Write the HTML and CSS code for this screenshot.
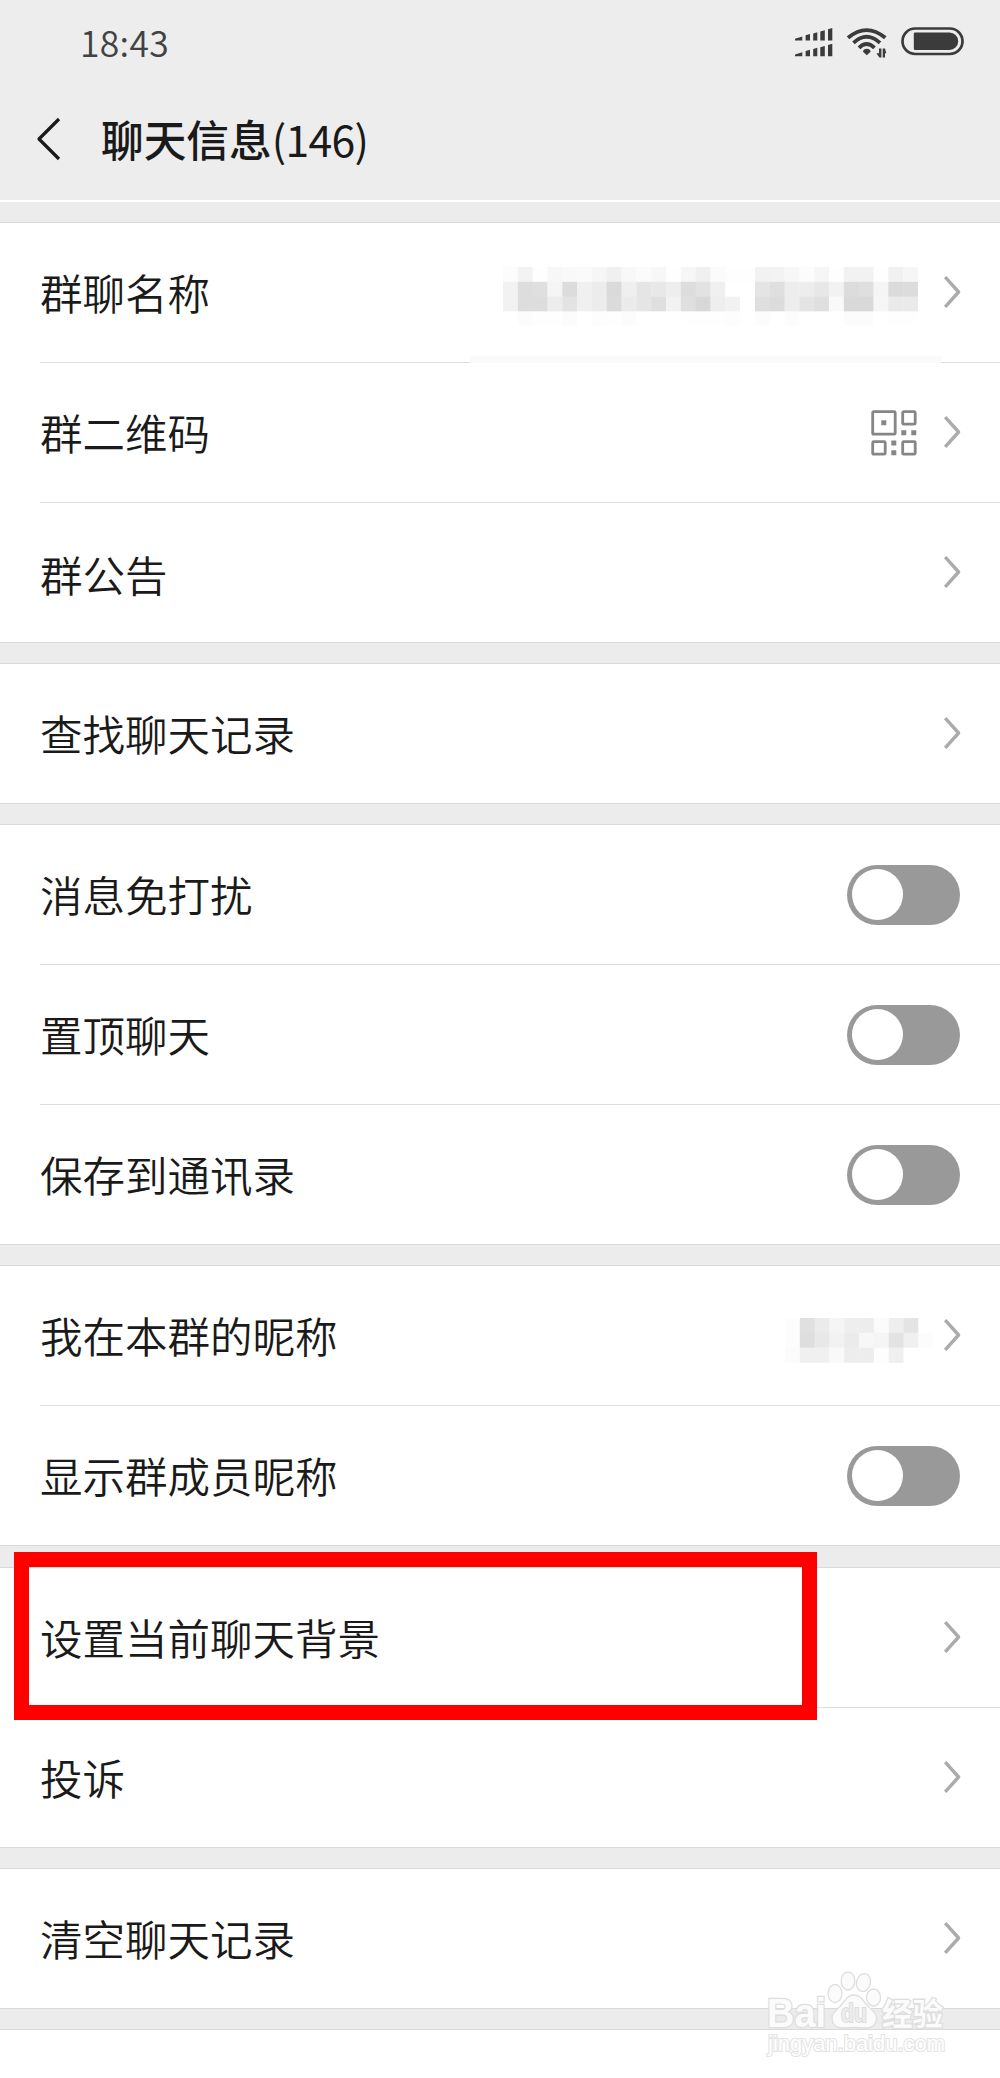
FILE: index.html
```html
<!DOCTYPE html>
<html lang="zh-CN">
<head>
<meta charset="utf-8">
<title>聊天信息</title>
<link rel="stylesheet" href="styles.css">
</head>
<body>
<svg class="defs" width="0" height="0" aria-hidden="true">
  <symbol id="chevron" viewBox="0 0 18 34"><path d="M2.2 2.2 15.6 17 2.2 31.8" fill="none" stroke="#ababab" stroke-width="3.4" stroke-linejoin="round"/></symbol>
</svg>
<div class="screen">
  <header class="header">
    <div class="status">
      <span class="time">18:43</span>
      <svg class="status-icons" width="172" height="34" viewBox="0 0 172 34" fill="#3b3b3b">
        <path d="M0 11.8 7.3 9.6V13.5H0zM10.6 8.3 15 7V13.5H10.6zM18.2 6.4 22.3 5.2V13.5H18.2zM25.3 4.6 29.8 3.3V13.5H25.3zM33 2.2 37.3 1V13.5H33z"/>
        <path d="M0 27.4 7.3 25.2V29.2H0zM10.6 24 15 22.7V29.2H10.6zM18.2 22 22.3 20.8V29.2H18.2zM25.3 20.2 29.8 19V29.2H25.3zM33 18 37.3 16.8V29.2H33z"/>
        <g fill="none" stroke="#3b3b3b" stroke-width="3.8">
          <path d="M53 10.8Q71.500-4.600 90.300 10.800"/>
          <path d="M58.500 15.800Q71.500 3.800 85 15.800"/>
          <path d="M64 20.800Q71.500 13.300 79.500 20.800"/>
        </g>
        <path d="M71.800 21.700c2 0 3.800 1.200 3.800 3L71.800 28.300 68 24.700c0-1.800 1.800-3 3.800-3z"/>
        <path d="M84 21.500H86.400V30.500H84.400L81.400 26.300H84zM87.700 21.500H90L91.300 26.300H90V30.500H87.700z"/>
        <rect x="107.500" y="1.500" width="60" height="25.500" rx="12.700" fill="none" stroke="#3b3b3b" stroke-width="2.700"/>
        <path d="M120 5.500H154.500a8.700 8.700 0 0 1 0 17.400H120a1.200 1.200 0 0 1-1.200-1.200V6.700A1.200 1.200 0 0 1 120 5.500z"/>
      </svg>
    </div>
    <div class="titlebar">
      <svg class="back" width="26" height="44" viewBox="0 0 26 44"><path d="M23 2 3 22 23 42" fill="none" stroke="#1a1a1a" stroke-width="3.200" stroke-linejoin="round"/></svg>
      <h1 class="title">聊天信息<span class="count">(146)</span></h1>
    </div>
  </header>
  <main class="list">
    <section class="group">
      <div class="row row-name"><span class="label">群聊名称</span><svg class="mosaic" width="415" height="59.200" data-cells="fcf3fef7f9faf6f0f8fbf7fef6f0fbfefef2f3f7fcf6fef2f2fef1f6 f2dddff5dcf0ecdaefe5e8eedde2f0ffffe4dfedede7f2dcdff5dadc f2ddddede3f0ecdbebe5dff2dfd8eef2ffdfdcede4dff9d9d9f6eaea fffcfefefcfffdfefcfffffffefefefdfffcfffcfffffffcfcfffefe"></svg><svg class="chevron"><use href="#chevron"/></svg></div>
      <div class="row"><span class="label">群二维码</span>
        <svg class="qr" width="46" height="46" viewBox="0 0 46 46"><g fill="none" stroke="#868686" stroke-width="2.800"><rect x="1.700" y="1.700" width="22.500" height="22.500" rx="1"/><rect x="31.700" y="1.700" width="12.500" height="12.500" rx="1"/><rect x="1.700" y="31.700" width="12.500" height="12.500" rx="1"/><rect x="31.700" y="31.700" width="12.500" height="12.500" rx="1"/></g><path fill="#868686" d="M10.300 10.300h5v5h-5zM30.300 20.300h5v5h-5zM40.300 20.300h5v5h-5zM20.300 30.500h5v5h-5zM20.300 40.300h5v5h-5z"/></svg>
        <svg class="chevron"><use href="#chevron"/></svg></div>
      <div class="row row-low"><span class="label">群公告</span><svg class="chevron"><use href="#chevron"/></svg></div>
    </section>
    <section class="group">
      <div class="row"><span class="label">查找聊天记录</span><svg class="chevron"><use href="#chevron"/></svg></div>
    </section>
    <section class="group">
      <div class="row"><span class="label">消息免打扰</span><span class="toggle"></span></div>
      <div class="row"><span class="label">置顶聊天</span><span class="toggle"></span></div>
      <div class="row"><span class="label">保存到通讯录</span><span class="toggle"></span></div>
    </section>
    <section class="group">
      <div class="row row-nick"><span class="label">我在本群的昵称</span><svg class="mosaic" width="148" height="44.400" data-cells="fde0ebf5eeedfbeee4ff fddee8f2ebf7f5e3f0fc fbf0f0f9ededfdefffff"></svg><svg class="chevron"><use href="#chevron"/></svg></div>
      <div class="row"><span class="label">显示群成员昵称</span><span class="toggle"></span></div>
    </section>
    <section class="group group-marked">
      <div class="row"><span class="label">设置当前聊天背景</span><svg class="chevron"><use href="#chevron"/></svg></div>
      <div class="row"><span class="label">投诉</span><svg class="chevron"><use href="#chevron"/></svg></div>
      <div class="highlight"></div>
    </section>
    <section class="group">
      <div class="row"><span class="label">清空聊天记录</span><svg class="chevron"><use href="#chevron"/></svg></div>
    </section>
    <section class="group group-next"></section>
  </main>
  <svg class="watermark" width="190" height="96" viewBox="0 0 190 96">
    <g class="wm-text">
      <text class="wm-bai" x="5" y="60.500" textLength="59" lengthAdjust="spacingAndGlyphs">Bai</text>
      <ellipse cx="73" cy="27.500" rx="7" ry="9"/><ellipse cx="86" cy="15" rx="6.800" ry="9"/><ellipse cx="101.500" cy="16.500" rx="7" ry="9" transform="rotate(12 101.500 16.500)"/><ellipse cx="111.500" cy="31.500" rx="7" ry="8.500"/>
      <path d="M92 29c6 0 8.500 4.500 12 9s10.500 8 10.500 14c0 7-5 10-11 10-4 0-7-.500-11.500-.500s-7 .500-11 .500c-6 0-11-3-11-10 0-6 6.500-9.500 10-14s6-9 12-9z"/>
      <text class="wm-du" x="79" y="56" textLength="26" lengthAdjust="spacingAndGlyphs">du</text>
      <text class="wm-cn" x="120" y="58.500" textLength="61" lengthAdjust="spacingAndGlyphs">经验</text>
      <text class="wm-url" x="6" y="84.500" textLength="177" lengthAdjust="spacingAndGlyphs">jingyan.baidu.com</text>
    </g>
  </svg>
</div>
<script src="script.js"></script>
</body>
</html>
```
FILE: styles.css
```css
* { box-sizing: border-box; }

body {
  margin: 0;
  background: #ececec;
  color: #1a1a1a;
  font-family: "Noto Sans CJK SC", "Noto Sans", sans-serif;
}

.defs { position: absolute; }

.screen {
  position: relative;
  width: 1000px;
  height: 2078px;
  overflow: hidden;
}

.header {
  height: 202px;
  background: #ededed;
  border-bottom: 2px solid #fff;
}

.status {
  display: flex;
  align-items: center;
  justify-content: space-between;
  height: 84px;
  padding: 0 33px 0 80px;
}

.time {
  padding-bottom: 1px;
  color: #424242;
  font-size: 35.5px;
  font-weight: 350;
  letter-spacing: 0.3px;
  line-height: 40px;
}

.status-icons { margin-top: 4px; }

.titlebar {
  display: flex;
  align-items: center;
  height: 110px;
  padding-left: 36px;
}

.title {
  margin: -3px 0 0 39px;
  font-size: 42.7px;
  font-weight: 500;
  line-height: 60px;
}

.count { font-weight: 400; letter-spacing: -0.7px; }

.list {
  display: flex;
  flex-direction: column;
  gap: 20px;
  padding-top: 20px;
}

.group {
  background: #fff;
  border-top: 1px solid #dadada;
  border-bottom: 1px solid #dadada;
}

.row {
  position: relative;
  display: flex;
  align-items: center;
  height: 140px;
  margin-left: 40px;
  padding-right: 39px;
  border-bottom: 1px solid #dedede;
}

.row:last-of-type,
.group-marked .row:nth-child(2) { height: 139px; border-bottom: 0; }

.group-marked { position: relative; margin-top: 1px; }

.label {
  flex: 1;
  padding-bottom: 2px;
  font-size: 42.5px;
  font-weight: 350;
  line-height: 60px;
}

.row-low .label { padding: 3px 0 0; }

.chevron { width: 18px; height: 34px; margin: -2px 0 0 26px; }

.mosaic { margin-right: -1px; }
.row-name .mosaic { margin-top: 8px; }
.row-nick .mosaic { margin-right: -16px; margin-top: 10px; }

/* faint patch left over the divider below the group name */
.row-name::after {
  content: "";
  position: absolute;
  left: 430px;
  bottom: -1px;
  width: 471px;
  height: 7px;
  background: #fafafa;
}

.toggle {
  width: 113px;
  height: 60px;
  margin-right: 1px;
  padding: 4.5px;
  border-radius: 30px;
  background: #999;
}

.toggle::before {
  content: "";
  display: block;
  width: 51px;
  height: 51px;
  border-radius: 50%;
  background: #fff;
}

.highlight {
  position: absolute;
  left: 14px;
  top: -16px;
  width: 803px;
  height: 168px;
  border: 15px solid #f00;
}

.group-next { height: 60px; }

.watermark {
  position: absolute;
  left: 762px;
  top: 1966px;
}

.wm-text {
  fill: #fbfbfb;
  stroke: #dedede;
  stroke-width: 1.3px;
  font-family: "Liberation Sans", "Noto Sans CJK SC", sans-serif;
  font-weight: 700;
}

.wm-text text { paint-order: stroke; stroke-width: 2.6px; }
.wm-bai { font-size: 40px; }
.wm-text .wm-du { font-size: 25px; fill: #ececec; stroke: #d6d6d6; stroke-width: 1.6px; }
.wm-cn { font-size: 31px; }
.wm-text .wm-url { font-size: 22px; font-weight: 400; fill: #fff; stroke: #e4e4e4; stroke-width: 2.2px; }
```
FILE: script.js
```js
// Each mosaic row is a run of two-digit grey levels, one per 14.8px cell.
const CELL = 14.82;
document.querySelectorAll(".mosaic").forEach((svg) => {
  svg.dataset.cells.split(" ").forEach((row, y) => {
    row.match(/../g).forEach((grey, x) => {
      const cell = document.createElementNS("http://www.w3.org/2000/svg", "rect");
      cell.setAttribute("x", x * CELL);
      cell.setAttribute("y", y * CELL);
      cell.setAttribute("width", CELL + 0.3);
      cell.setAttribute("height", CELL + 0.3);
      cell.setAttribute("fill", "#" + grey.repeat(3));
      svg.appendChild(cell);
    });
  });
});
```
